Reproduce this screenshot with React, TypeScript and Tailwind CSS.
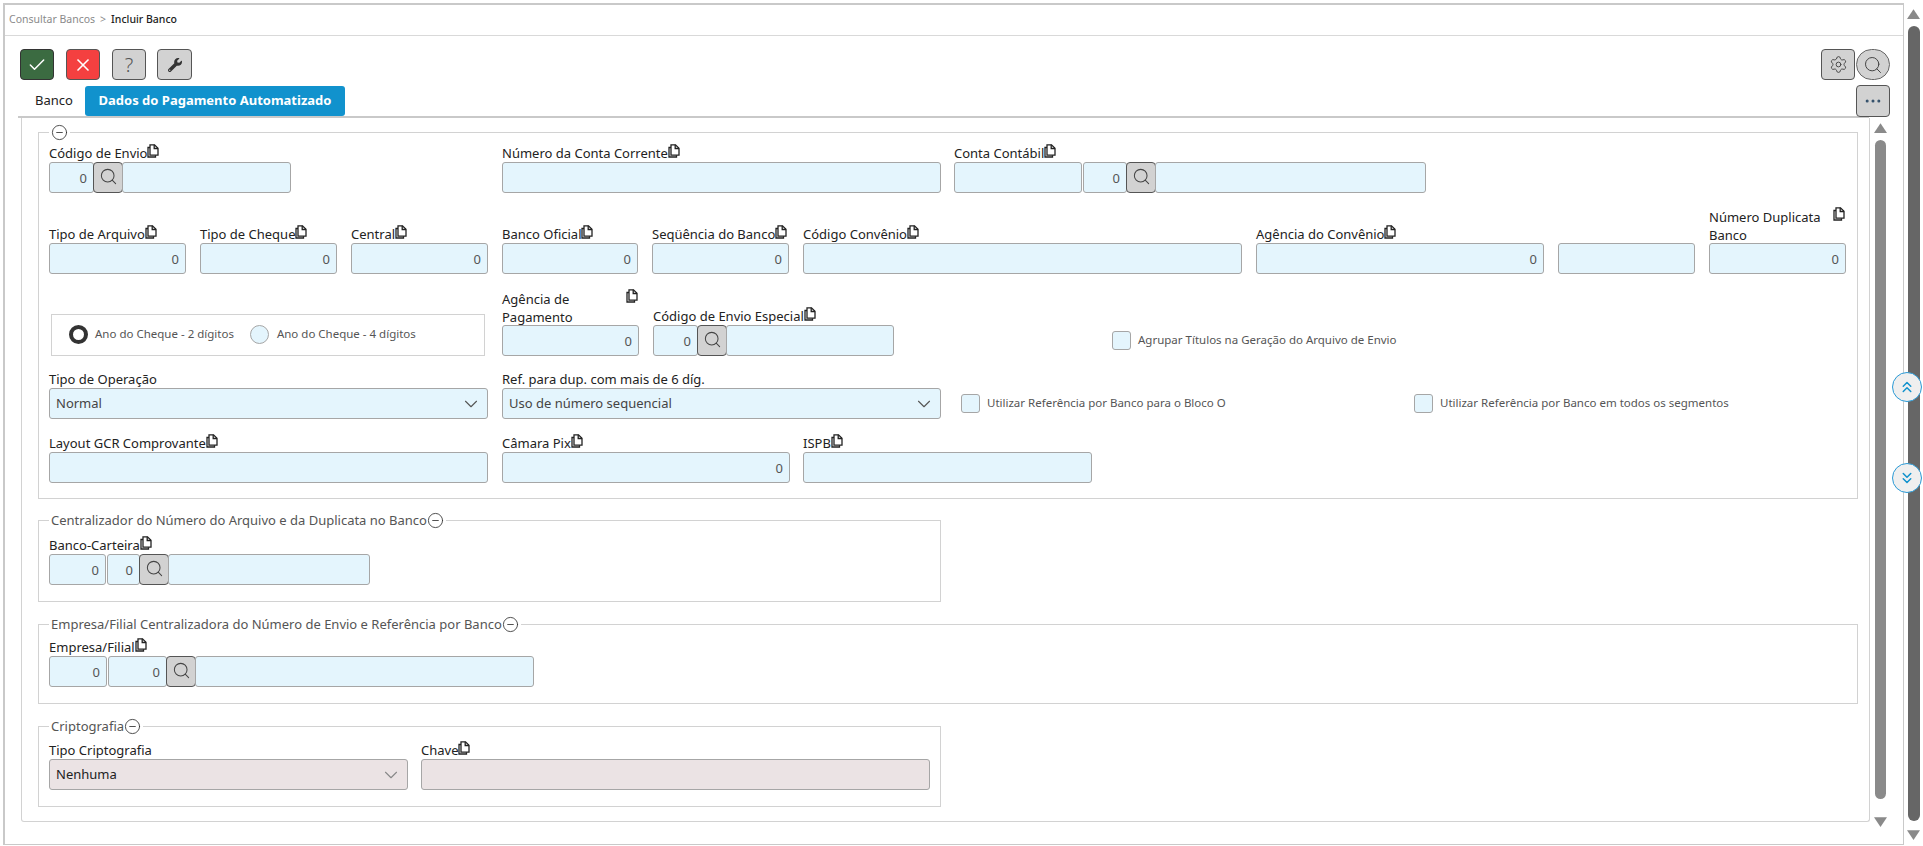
import type { ReactNode } from "react";
import { Check, ChevronDown, ChevronsDown, ChevronsUp, CircleMinus, Ellipsis, Search, Settings, X } from "lucide-react";
import { FaWrench } from "react-icons/fa";

function CopyIcon({ className = "" }: { className?: string }) {
  return (
    <svg viewBox="0 0 12 14" className={`inline-block w-[12px] h-[14px] shrink-0 text-[#222] ${className}`} fill="none" stroke="currentColor" strokeWidth="1.3">
      <path d="M3 3.500H1v9.500h7.500v-2" />
      <path d="M3 .8h4.500L11 4.300v6.900H3z" fill="#fff" />
      <path d="M7.200 .8v3.700H11" />
    </svg>
  );
}

function Label({ text, copy = true }: { text: string; copy?: boolean }) {
  return (
    <div className="flex items-start h-[19px] text-[13px] leading-[19px] text-[#222] whitespace-nowrap">
      <span className="mt-px">{text}</span>
      {copy && <CopyIcon className="mt-px" />}
    </div>
  );
}

function TextBox({ value = "", className = "", disabled = false }: { value?: string; className?: string; disabled?: boolean }) {
  return (
    <input
      readOnly
      value={value}
      className={`h-[31px] min-w-0 px-[6px] pt-px text-right text-[13px] text-[#555] border border-[#a6a6a6] rounded-[3px] outline-none ${disabled ? "bg-[#ebe3e4]" : "bg-[#e4f5fd]"} ${className}`}
    />
  );
}

function Lookup({ className = "" }: { className?: string }) {
  return (
    <button className={`h-[31px] shrink-0 flex items-center justify-center bg-[#d2d2d2] border border-[#555] rounded-[4px] ${className}`}>
      <Search className="w-[19px] h-[19px] -mt-[2px] text-[#444]" strokeWidth={1.3} />
    </button>
  );
}

function SelectBox({ value, disabled = false, className = "" }: { value: string; disabled?: boolean; className?: string }) {
  return (
    <div className={`h-[31px] flex items-center justify-between pl-[6px] pr-[5px] text-[13px] border border-[#a6a6a6] rounded-[3px] ${disabled ? "bg-[#ebe3e4] text-[#222]" : "bg-[#e4f5fd] text-[#444]"} ${className}`}>
      <span className="pt-px">{value}</span>
      <ChevronDown className={`w-[22px] h-[22px] ${disabled ? "text-[#888]" : "text-[#555]"}`} strokeWidth={1.2} />
    </div>
  );
}

function Tick({ text, className = "" }: { text: string; className?: string }) {
  return (
    <div className={`flex items-center gap-[7px] text-[11.500px] text-[#555] whitespace-nowrap ${className}`}>
      <span className="w-[19px] h-[19px] bg-[#e4f5fd] border border-[#a6a6a6] rounded-[3px]" />
      <span className="-mt-px">{text}</span>
    </div>
  );
}

function Group({ title, children, className = "" }: { title?: string; children: ReactNode; className?: string }) {
  return (
    <fieldset className={`border border-[#d2d2d2] pl-[10px] ${className}`}>
      <legend className="h-[18px] flex items-center px-[2px] text-[13px] leading-[18px] text-[#555] whitespace-nowrap">
        {title && <span>{title}</span>}
        <CircleMinus className="w-[17px] h-[17px] text-[#333]" strokeWidth={1.2} />
      </legend>
      {children}
    </fieldset>
  );
}

function Triangle({ up, className = "" }: { up?: boolean; className?: string }) {
  return (
    <svg viewBox="0 0 12 9" className={`w-[13px] h-[10px] ${className}`}>
      <polygon points={up ? "6,0 12,9 0,9" : "0,0 12,0 6,9"} fill="currentColor" />
    </svg>
  );
}

export default function App() {
  return (
    <div className="relative flex w-[1923px] h-[846px] overflow-hidden bg-white font-['Noto_Sans',sans-serif]">
      <div className="ml-[3px] mt-[3px] w-[1901px] h-[842px] shrink-0 border-l-2 border-t-2 border-r border-b border-[#c9c9c9]">
        {/* breadcrumb */}
        <div className="h-[31px] border-b border-[#d9d9d9] pl-[4px] flex items-center text-[10.500px]">
          <span className="text-[#8a8a8a]">Consultar Bancos</span>
          <span className="text-[#8a8a8a] mx-[5px]">&gt;</span>
          <span className="text-[#222] font-medium">Incluir Banco</span>
        </div>

        {/* toolbar */}
        <div className="h-[49px] pt-[13px] pl-[15px] pr-[13px] flex justify-between">
          <div className="flex gap-[12px]">
            <button className="w-[34px] h-[31px] flex items-center justify-center bg-[#3b6b41] border border-[#333] rounded-[4px]">
              <Check className="w-[20px] h-[20px] text-white" strokeWidth={1.800} />
            </button>
            <button className="w-[34px] h-[31px] flex items-center justify-center bg-[#f44040] border border-[#555] rounded-[4px]">
              <X className="w-[20px] h-[20px] text-white" strokeWidth={2} />
            </button>
            <button className="w-[34px] h-[31px] flex items-center justify-center bg-[#d2d2d2] border border-[#555] rounded-[4px] text-[20px] font-light text-[#555]">?</button>
            <button className="w-[35px] h-[31px] -ml-px flex items-center justify-center bg-[#d2d2d2] border border-[#555] rounded-[4px]">
              <FaWrench className="w-[14px] h-[14px] text-[#333]" />
            </button>
          </div>
          <div className="flex">
            <button className="w-[34px] h-[31px] flex items-center justify-center bg-[#d2d2d2] border border-[#555] rounded-[4px]">
              <Settings className="w-[19px] h-[19px] text-[#444]" strokeWidth={1.200} />
            </button>
            <button className="w-[34px] h-[31px] ml-px flex items-center justify-center bg-[#d2d2d2] border border-[#666] rounded-full">
              <Search className="w-[20px] h-[20px] text-[#444]" strokeWidth={1.200} />
            </button>
          </div>
        </div>

        {/* tabs */}
        <div className="flex h-[33px] ml-[13px]">
          <div className="w-[1851px] h-[33px] shrink-0 flex items-start pt-px border-b-2 border-[#c9c9c9]">
            <span className="w-[67px] h-[30px] pl-[17px] flex items-center text-[13px] text-[#222]">Banco</span>
            <span className="w-[260px] h-[30px] flex items-center justify-center rounded-[3px] bg-[#1192cd] text-[13px] font-bold text-white">Dados do Pagamento Automatizado</span>
          </div>
          <button className="w-[34px] h-[32px] -ml-[13px] relative flex items-center justify-center bg-[#d2d2d2] border border-[#555] rounded-[4px]">
            <Ellipsis className="w-[20px] h-[20px] text-[#33506b]" strokeWidth={1.600} />
          </button>
        </div>

        <div className="flex items-start ml-[16px]">
          {/* form panel */}
          <div className="w-[1849px] h-[704px] shrink-0 pl-[16px] pt-[5px] border-l border-r border-b border-[#d2d2d2] rounded-b-[3px]">
            <Group className="w-[1820px] pb-[15px]">
              <div className="h-[52px] flex items-end">
                <div className="w-[242px]">
                  <Label text="Código de Envio" />
                  <div className="flex">
                    <TextBox value="0" className="w-[45px]" />
                    <Lookup className="w-[30px] -ml-px" />
                    <TextBox className="flex-1 -ml-px" />
                  </div>
                </div>
                <div className="w-[439px] ml-[211px]">
                  <Label text="Número da Conta Corrente" />
                  <TextBox className="w-full" />
                </div>
                <div className="w-[472px] ml-[13px]">
                  <Label text="Conta Contábil" />
                  <div className="flex">
                    <TextBox className="w-[128px]" />
                    <TextBox value="0" className="w-[44px] ml-px" />
                    <Lookup className="w-[30px] -ml-px" />
                    <TextBox className="flex-1 -ml-px" />
                  </div>
                </div>
              </div>

              <div className="h-[81px] flex items-end gap-[14px]">
                <div className="w-[137px]"><Label text="Tipo de Arquivo" /><TextBox value="0" className="w-full" /></div>
                <div className="w-[137px]"><Label text="Tipo de Cheque" /><TextBox value="0" className="w-full" /></div>
                <div className="w-[137px]"><Label text="Central" /><TextBox value="0" className="w-full" /></div>
                <div className="w-[136px]"><Label text="Banco Oficial" /><TextBox value="0" className="w-full" /></div>
                <div className="w-[137px]"><Label text="Seqüência do Banco" /><TextBox value="0" className="w-full" /></div>
                <div className="w-[439px]"><Label text="Código Convênio" /><TextBox className="w-full" /></div>
                <div className="w-[288px]"><Label text="Agência do Convênio" /><TextBox value="0" className="w-full" /></div>
                <div className="w-[137px]"><TextBox className="w-full" /></div>
                <div className="w-[137px]">
                  <div className="flex justify-between items-start h-[36px] text-[13px] leading-[18px] text-[#222]">
                    <span className="mt-px">Número Duplicata<br />Banco</span>
                    <CopyIcon className="mr-[1px]" />
                  </div>
                  <TextBox value="0" className="w-full" />
                </div>
              </div>

              <div className="h-[82px] flex items-end">
                <fieldset className="ml-[2px] w-[434px] h-[42px] shrink-0 border border-[#d2d2d2] flex items-center pl-[17px] pb-[2px] text-[11.500px] text-[#555] whitespace-nowrap">
                  <span className="w-[19px] h-[19px] rounded-full border-[4px] border-[#333] bg-white" />
                  <span className="ml-[7px]">Ano do Cheque - 2 dígitos</span>
                  <span className="ml-[16px] w-[19px] h-[19px] rounded-full border border-[#a6a6a6] bg-[#e4f5fd]" />
                  <span className="ml-[8px]">Ano do Cheque - 4 dígitos</span>
                </fieldset>
                <div className="w-[137px] ml-[17px]">
                  <div className="flex justify-between items-start h-[36px] text-[13px] leading-[18px] text-[#222]">
                    <span className="mt-px">Agência de<br />Pagamento</span>
                    <CopyIcon className="mr-[1px]" />
                  </div>
                  <TextBox value="0" className="w-full h-[30px]" />
                </div>
                <div className="w-[241px] ml-[14px]">
                  <Label text="Código de Envio Especial" />
                  <div className="flex">
                    <TextBox value="0" className="w-[45px] h-[30px]" />
                    <Lookup className="w-[30px] h-[30px] -ml-px" />
                    <TextBox className="flex-1 h-[30px] -ml-px" />
                  </div>
                </div>
                <Tick text="Agrupar Títulos na Geração do Arquivo de Envio" className="ml-[218px] mb-[6px]" />
              </div>

              <div className="h-[63px] flex items-end gap-[14px]">
                <div className="w-[439px]"><Label text="Tipo de Operação" copy={false} /><SelectBox value="Normal" /></div>
                <div className="w-[439px]"><Label text="Ref. para dup. com mais de 6 díg." copy={false} /><SelectBox value="Uso de número sequencial" /></div>
                <Tick text="Utilizar Referência por Banco para o Bloco O" className="w-[439px] ml-[6px] mb-[6px]" />
                <Tick text="Utilizar Referência por Banco em todos os segmentos" className="mb-[6px]" />
              </div>

              <div className="h-[64px] flex items-end gap-[14px]">
                <div className="w-[439px]"><Label text="Layout GCR Comprovante" /><TextBox className="w-full" /></div>
                <div className="w-[288px]"><Label text="Câmara Pix" /><TextBox value="0" className="w-full" /></div>
                <div className="w-[289px] -ml-px"><Label text="ISPB" /><TextBox className="w-full" /></div>
              </div>
            </Group>

            <Group title="Centralizador do Número do Arquivo e da Duplicata no Banco" className="w-[903px] mt-[12px] pb-[16px]">
              <div className="h-[56px] flex items-end">
                <div className="w-[321px]">
                  <Label text="Banco-Carteira" />
                  <div className="flex">
                    <TextBox value="0" className="w-[57px]" />
                    <TextBox value="0" className="w-[33px] ml-px" />
                    <Lookup className="w-[30px] -ml-px" />
                    <TextBox className="flex-1 -ml-px" />
                  </div>
                </div>
              </div>
            </Group>

            <Group title="Empresa/Filial Centralizadora do Número de Envio e Referência por Banco" className="w-[1820px] mt-[13px] pb-[16px]">
              <div className="h-[54px] flex items-end">
                <div className="w-[485px]">
                  <Label text="Empresa/Filial" />
                  <div className="flex">
                    <TextBox value="0" className="w-[58px]" />
                    <TextBox value="0" className="w-[59px] ml-px" />
                    <Lookup className="w-[30px] -ml-px" />
                    <TextBox className="flex-1 -ml-px" />
                  </div>
                </div>
              </div>
            </Group>

            <Group title="Criptografia" className="w-[903px] mt-[13px] pb-[16px]">
              <div className="h-[55px] flex items-end gap-[13px]">
                <div className="w-[359px]"><Label text="Tipo Criptografia" copy={false} /><SelectBox value="Nenhuma" disabled /></div>
                <div className="w-[509px]"><Label text="Chave" /><TextBox className="w-full" disabled /></div>
              </div>
            </Group>
          </div>

          {/* inner scrollbar */}
          <div className="ml-[4px] w-[13px] h-[714px] pt-[5px] flex flex-col items-center text-[#8a8a8a]">
            <Triangle up />
            <div className="w-[11px] h-[659px] mt-[7px] rounded-full bg-[#8a8a8a]" />
            <Triangle className="mt-[18px]" />
          </div>
        </div>
      </div>

      {/* outer scrollbar */}
      <div className="ml-[3px] w-[13px] pt-[9px] flex flex-col items-center text-[#8a8a8a]">
        <Triangle up />
        <div className="w-[12px] h-[795px] mt-[7px] rounded-full bg-[#666]" />
        <Triangle className="mt-[9px]" />
      </div>

      {/* page up / page down */}
      <button className="absolute left-[1892px] top-[372px] w-[30px] h-[30px] flex items-center justify-center rounded-full bg-[#efefef] border-[1.500px] border-[#2a9ad6]">
        <ChevronsUp className="w-[18px] h-[18px] text-[#1192cd]" strokeWidth={2} />
      </button>
      <button className="absolute left-[1892px] top-[463px] w-[30px] h-[30px] flex items-center justify-center rounded-full bg-[#efefef] border-[1.500px] border-[#2a9ad6]">
        <ChevronsDown className="w-[18px] h-[18px] text-[#1192cd]" strokeWidth={2} />
      </button>
    </div>
  );
}
